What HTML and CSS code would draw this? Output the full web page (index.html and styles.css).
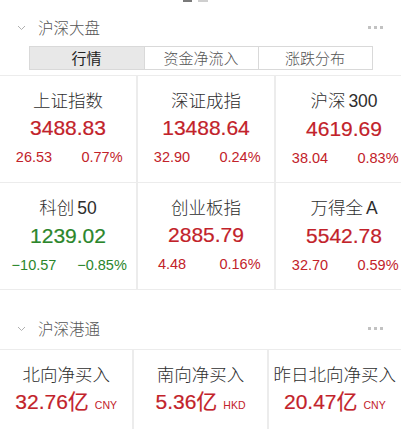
FILE: index.html
```html
<!DOCTYPE html>
<html lang="zh-CN">
<head>
<meta charset="utf-8">
<title>沪深大盘</title>
<link rel="stylesheet" href="styles.css">
</head>
<body>
<div class="page">
  <div class="handle"><span class="handle-a"></span><span class="handle-b"></span></div>

  <section class="section">
    <div class="sec-head first">
      <svg class="chev" width="9" height="6" viewBox="0 0 9 6"><path d="M1 1 L4.5 4.5 L8 1" fill="none" stroke="#b0b0b0" stroke-width="1"/></svg>
      <span class="sec-title">沪深大盘</span>
      <span class="dots"><i></i><i></i><i></i></span>
    </div>
    <div class="tabs">
      <div class="tab active">行情</div>
      <div class="tab">资金净流入</div>
      <div class="tab">涨跌分布</div>
    </div>
    <div class="grid">
      <div class="cell">
        <div class="name">上证指数</div>
        <div class="value up">3488.83</div>
        <div class="chg up"><span>26.53</span><span>0.77%</span></div>
      </div>
      <div class="cell">
        <div class="name">深证成指</div>
        <div class="value up">13488.64</div>
        <div class="chg up"><span>32.90</span><span>0.24%</span></div>
      </div>
      <div class="cell">
        <div class="name">沪深<span class="num">300</span></div>
        <div class="value up">4619.69</div>
        <div class="chg up"><span>38.04</span><span>0.83%</span></div>
      </div>
      <div class="cell">
        <div class="name">科创<span class="num">50</span></div>
        <div class="value down">1239.02</div>
        <div class="chg down"><span>−10.57</span><span>−0.85%</span></div>
      </div>
      <div class="cell">
        <div class="name">创业板指</div>
        <div class="value up">2885.79</div>
        <div class="chg up"><span>4.48</span><span>0.16%</span></div>
      </div>
      <div class="cell">
        <div class="name">万得全<span class="num">A</span></div>
        <div class="value up">5542.78</div>
        <div class="chg up"><span>32.70</span><span>0.59%</span></div>
      </div>
    </div>
  </section>

  <section class="section">
    <div class="sec-head second">
      <svg class="chev" width="9" height="6" viewBox="0 0 9 6"><path d="M1 1 L4.5 4.5 L8 1" fill="none" stroke="#b0b0b0" stroke-width="1"/></svg>
      <span class="sec-title">沪深港通</span>
      <span class="dots"><i></i><i></i><i></i></span>
    </div>
    <div class="grid">
      <div class="cell">
        <div class="name">北向净买入</div>
        <div class="value up">32.76亿<small class="unit">CNY</small></div>
      </div>
      <div class="cell">
        <div class="name">南向净买入</div>
        <div class="value up">5.36亿<small class="unit">HKD</small></div>
      </div>
      <div class="cell">
        <div class="name">昨日北向净买入</div>
        <div class="value up">20.47亿<small class="unit">CNY</small></div>
      </div>
    </div>
  </section>
</div>
</body>
</html>
```

FILE: styles.css
```css
html, body {
  margin: 0;
  padding: 0;
  background: #ffffff;
}

body {
  font-family: "Liberation Sans", Arial, "Noto Sans CJK SC", sans-serif;
  color: #333333;
}

.page {
  width: 401px;
  overflow: hidden;
}

.handle {
  height: 3px;
  display: flex;
  justify-content: center;
  gap: 6px;
}

.handle-a {
  width: 9px;
  height: 2px;
  background: #7a7a7a;
  margin-left: -10px;
}

.handle-b {
  width: 10px;
  height: 2px;
  background: #cfcfcf;
}

.sec-head {
  display: flex;
  align-items: center;
  padding-left: 17px;
  padding-right: 10px;
  height: 24px;
}

.sec-head.first {
  padding-top: 12px;
  padding-bottom: 7px;
}

.sec-head.second {
  padding-top: 26px;
  padding-bottom: 9px;
}

.chev {
  display: block;
  margin-right: 12px;
  margin-top: 1px;
}

.sec-title {
  font-family: "Noto Sans CJK SC", sans-serif;
  font-weight: 300;
  font-size: 15.5px;
  color: #555555;
  flex: 1;
  line-height: 24px;
}

.dots {
  display: flex;
  gap: 3px;
  margin-right: 8px;
}

.dots i {
  display: block;
  width: 3px;
  height: 3px;
  background: #c2c2c2;
}

.tabs {
  display: grid;
  grid-template-columns: repeat(3, 1fr);
  width: 344px;
  margin: 0 auto 5px;
  border: 1px solid #d9d9d9;
  box-sizing: border-box;
  height: 24px;
}

.tab {
  font-family: "Noto Sans CJK SC", sans-serif;
  font-weight: 300;
  font-size: 15px;
  line-height: 22px;
  text-align: center;
  color: #555555;
  border-left: 1px solid #d9d9d9;
}

.tab:first-child {
  border-left: none;
}

.tab.active {
  background: #e8e8e8;
  color: #222222;
  font-weight: 400;
}

.grid {
  display: grid;
  grid-template-columns: 1fr 1fr 1fr;
  column-gap: 2px;
  row-gap: 1px;
  background: #ececec;
  border-top: 1px solid #ececec;
  border-bottom: 1px solid #ececec;
}

.cell {
  background: #ffffff;
  height: 106px;
  box-sizing: border-box;
  padding-top: 13px;
  text-align: center;
}

.name {
  font-family: "Noto Sans CJK SC", sans-serif;
  font-weight: 300;
  font-size: 17.5px;
  line-height: 22px;
  color: #2e2e2e;
}

.num {
  font-family: "Liberation Sans", sans-serif;
  font-weight: 400;
  margin-left: 3px;
}

.value {
  font-size: 21px;
  line-height: 28px;
  margin-top: 3px;
  font-family: "Liberation Sans", "Noto Sans CJK SC", sans-serif;
  -webkit-text-stroke: 0.2px currentColor;
}

.unit {
  font-family: "Liberation Sans", sans-serif;
  font-size: 10.5px;
  margin-left: 6px;
  -webkit-text-stroke: 0;
}

.chg {
  display: grid;
  grid-template-columns: 68px 68px;
  justify-content: center;
  margin-top: 5px;
  font-size: 14.5px;
  line-height: 20px;
}

.up {
  color: #c2222a;
}

.down {
  color: #2b862b;
}
```
